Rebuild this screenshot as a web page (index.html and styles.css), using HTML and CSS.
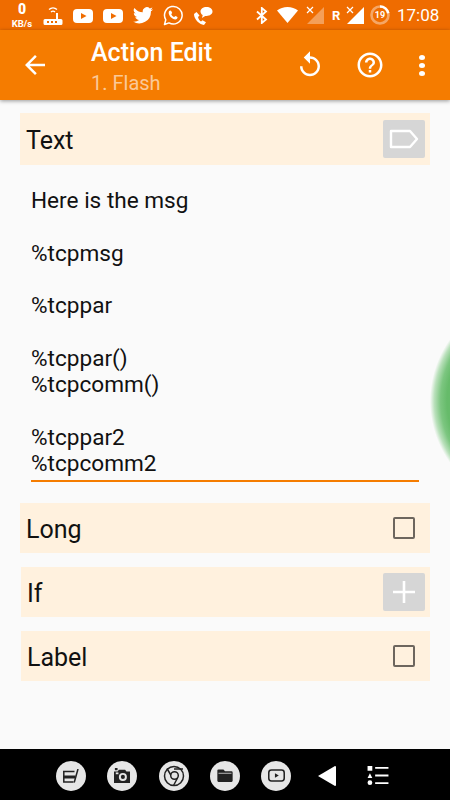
FILE: index.html
```html
<!DOCTYPE html>
<html lang="en">
<head>
  <meta charset="UTF-8">
  <meta name="viewport" content="width=device-width, initial-scale=1">
  <title>Action Edit</title>
  <link rel="stylesheet" href="styles.css">
</head>
<body>

  <div class="statusbar">
    <div class="netspeed"><b>0</b><span>KB/s</span></div>
    <svg class="st router" width="20" height="20" viewBox="0 0 20 20">
      <path d="M6 4.500a6 6 0 0 1 8 0M8 7a3 3 0 0 1 4 0" fill="none" stroke="#fff" stroke-width="1.300"/>
      <path d="M13 8h2v6h3a1.500 1.500 0 0 1 1.500 1.500v3A1.500 1.500 0 0 1 18 20H2a1.500 1.500 0 0 1-1.500-1.500v-3A1.500 1.500 0 0 1 2 14h11z" fill="#fff"/>
      <path d="M4 16h2v2H4zM8 16h2v2H8zM12 16h2v2h-2z" fill="#ef6c00"/>
    </svg>
    <svg class="st yt" width="20" height="14" viewBox="0 0 20 14">
      <rect width="20" height="14" rx="4" fill="#fff"/>
      <path d="M8 4l5.500 3L8 10z" fill="#ef6c00"/>
    </svg>
    <svg class="st yt" width="20" height="14" viewBox="0 0 20 14">
      <rect width="20" height="14" rx="4" fill="#fff"/>
      <path d="M8 4l5.500 3L8 10z" fill="#ef6c00"/>
    </svg>
    <svg class="st twitter" width="20" height="17" viewBox="0 0 24 20">
      <path d="M24 2.400a9.800 9.800 0 0 1-2.800.8A5 5 0 0 0 23.300.5a9.800 9.800 0 0 1-3.100 1.200 4.900 4.900 0 0 0-8.400 4.500A14 14 0 0 1 1.700.9a4.900 4.900 0 0 0 1.500 6.600 4.900 4.900 0 0 1-2.200-.6 4.900 4.900 0 0 0 3.900 4.900 4.900 4.900 0 0 1-2.200.1 4.900 4.900 0 0 0 4.600 3.400A9.900 9.900 0 0 1 0 17.300 14 14 0 0 0 21.500 4.900 10 10 0 0 0 24 2.400z" fill="#fff"/>
    </svg>
    <svg class="st whatsapp" width="20" height="21" viewBox="0 0 20 21">
      <path d="M1.500 19.500l1.300-4.700A8.800 8.800 0 1 1 6 17.900z" fill="none" stroke="#fff" stroke-width="1.500" stroke-linejoin="round"/>
      <path d="M7.200 5.500c-.6 0-1.500.8-1.500 2.200 0 3 3.500 6.700 6.600 6.700 1.400 0 2.300-1 2.300-1.800 0-.5-1.800-1.500-2.200-1.500-.4 0-.8 1-1.200 1-.8 0-2.900-2-2.900-2.900 0-.4.900-.8.900-1.200 0-.4-1.100-2.500-2-2.500z" fill="#fff"/>
    </svg>
    <svg class="st chat" width="20" height="20" viewBox="0 0 20 20">
      <path d="M3.500 6L1 8c0 5 5 10.500 10 11l2-2.800-3.500-2-1.500 1.300C6.500 14.500 5.500 13 5 11l1.500-1.500z" fill="#fff"/>
      <path d="M13.500 1C10 1 7.500 3 7.500 5.500c0 1.500.9 2.800 2.200 3.600L9 12l3.200-2.100h1.300c3.500 0 6-2 6-4.400S17 1 13.500 1z" fill="#fff"/>
    </svg>
    <svg class="st bluetooth" width="12" height="17" viewBox="0 0 12 17">
      <path d="M1 4.500l9 8L5.800 16V1L10 4.500l-9 8" fill="none" stroke="#fff" stroke-width="1.800"/>
    </svg>
    <svg class="st wifi" width="21" height="16" viewBox="0 0 21 16">
      <path d="M0 3.500C3 1.200 6.500 0 10.500 0S18 1.200 21 3.500L10.500 16z" fill="#fff"/>
    </svg>
    <svg class="st signal" width="18" height="18" viewBox="0 0 18 18">
      <path d="M18 1v17H1z" fill="#fff" fill-opacity=".35"/>
      <path d="M1 1l6 6M7 1L1 7" stroke="#fff" stroke-width="1.200"/>
    </svg>
    <span class="roam">R</span>
    <svg class="st signal2" width="18" height="18" viewBox="0 0 18 18">
      <path d="M18 1v17H1z" fill="#fff"/>
      <path d="M1 1l6 6M7 1L1 7" stroke="#ef6c00" stroke-width="3"/>
      <path d="M1 1l6 6M7 1L1 7" stroke="#fff" stroke-width="1.200"/>
    </svg>
    <div class="battery">
      <svg width="20" height="20" viewBox="0 0 20 20">
        <circle cx="10" cy="10" r="8.500" fill="none" stroke="#fff" stroke-opacity=".4" stroke-width="2.600"/>
        <path d="M10 1.500a8.500 8.500 0 0 1 8.300 6.800" fill="none" stroke="#fff" stroke-width="2.600"/>
      </svg>
      <span>19</span>
    </div>
    <span class="clock">17:08</span>
  </div>

  <header class="appbar">
    <svg class="back" width="30" height="30" viewBox="0 0 24 24">
      <path d="M20 11H7.830l5.590-5.590L12 4l-8 8 8 8 1.410-1.410L7.830 13H20v-2z" fill="#fff"/>
    </svg>
    <div class="titles">
      <h1>Action Edit</h1>
      <p>1. Flash</p>
    </div>
    <svg class="undo" width="30" height="30" viewBox="0 0 24 24">
      <path d="M12 5V1L7 6l5 5V7c3.310 0 6 2.690 6 6s-2.690 6-6 6-6-2.690-6-6H4c0 4.420 3.580 8 8 8s8-3.580 8-8-3.580-8-8-8z" fill="#fff"/>
    </svg>
    <svg class="help" width="30" height="30" viewBox="0 0 24 24">
      <path d="M11 18h2v-2h-2v2zm1-16C6.480 2 2 6.480 2 12s4.480 10 10 10 10-4.480 10-10S17.520 2 12 2zm0 18c-4.410 0-8-3.590-8-8s3.590-8 8-8 8 3.590 8 8-3.590 8-8 8zm0-14c-2.210 0-4 1.790-4 4h2c0-1.100.9-2 2-2s2 .9 2 2c0 2-3 1.750-3 5h2c0-2.250 3-2.500 3-5 0-2.210-1.790-4-4-4z" fill="#fff"/>
    </svg>
    <div class="dots"><i></i><i></i><i></i></div>
  </header>

  <main>
    <div class="row row-first">
      <span>Text</span>
      <div class="btn">
        <svg width="30" height="22" viewBox="0 0 30 22">
          <path d="M2 3h19l7 8-7 8H2z" fill="none" stroke="#fff" stroke-width="2.400" stroke-linejoin="round"/>
        </svg>
      </div>
    </div>

    <div class="textfield">Here is the msg

%tcpmsg

%tcppar

%tcppar()
%tcpcomm()

%tcppar2
%tcpcomm2</div>

    <div class="row row-long">
      <span>Long</span>
      <div class="check"></div>
    </div>
    <div class="row row-inset">
      <span>If</span>
      <div class="btn">
        <svg width="22" height="22" viewBox="0 0 22 22">
          <path d="M11 0v22M0 11h22" stroke="#fff" stroke-width="2.600"/>
        </svg>
      </div>
    </div>
    <div class="row row-inset">
      <span>Label</span>
      <div class="check"></div>
    </div>

    <div class="edge-glow"></div>
  </main>

  <nav class="navbar">
    <div class="app">
      <svg width="16" height="14" viewBox="0 0 16 14">
        <path d="M0 2.500h11.500M.8 2.500V13H10.500" fill="none" stroke="#222" stroke-width="1.500"/>
        <path d="M0 6.500h12.500L12 9.500H0z" fill="#222"/>
        <path d="M15 0l-3.800 13.500" fill="none" stroke="#222" stroke-width="1.500"/>
      </svg>
    </div>
    <div class="app">
      <svg width="18" height="16" viewBox="0 0 20 18">
        <path d="M1 4h4l1.500-2h7L15 4h4v13H1z" fill="#222"/>
        <circle cx="11" cy="10" r="4.500" fill="#e6e6e6"/>
        <circle cx="11" cy="10" r="2.300" fill="#222"/>
        <path d="M2 0h3v2.500H2z" fill="#222"/>
        <path d="M3 5h3v2H3z" fill="#e6e6e6"/>
      </svg>
    </div>
    <div class="app">
      <svg width="22" height="22" viewBox="0 0 22 22" fill="none" stroke="#222" stroke-width="1.500">
        <circle cx="11" cy="11" r="9.500"/>
        <circle cx="11.500" cy="10.500" r="3.800"/>
        <path d="M11 4h9M7.800 10L4 3.500M14.500 13L10.500 20.500"/>
      </svg>
    </div>
    <div class="app">
      <svg width="16" height="13" viewBox="0 0 20 17">
        <path d="M0 2a1.500 1.500 0 0 1 1.500-1.500H8L10 3h8.500A1.500 1.500 0 0 1 20 4.500v11a1.500 1.500 0 0 1-1.500 1.500h-17A1.500 1.500 0 0 1 0 15.500z" fill="#222"/>
        <path d="M1.500 5h17v1H1.500z" fill="#e6e6e6"/>
      </svg>
    </div>
    <div class="app">
      <svg width="17" height="13" viewBox="0 0 22 16">
        <rect x="1" y="1" width="20" height="14" rx="3.500" fill="none" stroke="#222" stroke-width="2"/>
        <path d="M9 5l5 3-5 3z" fill="#222"/>
      </svg>
    </div>
    <svg class="nav-back" width="18" height="20" viewBox="0 0 18 20">
      <path d="M17 0a1 1 0 0 1 1 1v18a1 1 0 0 1-1 1L0 10z" fill="#fff"/>
    </svg>
    <svg class="nav-list" width="22" height="19" viewBox="0 0 22 20">
      <rect width="5" height="5" fill="#fff"/>
      <path d="M2.500 7.500L5 12.500H0z" fill="#fff"/>
      <circle cx="2.500" cy="17.500" r="2.500" fill="#fff"/>
      <path d="M8 2h14M8 10h14M8 18h14" stroke="#fff" stroke-width="2"/>
    </svg>
  </nav>

</body>
</html>
```

FILE: styles.css
```css
* { margin: 0; padding: 0; box-sizing: border-box; }
html, body { height: 100%; }
body {
  display: flex; flex-direction: column;
  overflow: hidden;
  background: #fafafa; color: #111;
  font-family: Roboto, 'Noto Sans', sans-serif;
}
svg { display: block; flex: none; }

/* status bar */
.statusbar {
  height: 30px; flex: none; display: flex; align-items: center;
  background: #ef6c00; color: #fff;
}
.netspeed {
  width: 26px; margin-left: 9px;
  display: flex; flex-direction: column; align-items: center;
  font-weight: 700;
}
.netspeed b { font-size: 14px; line-height: 17px; }
.netspeed span { font-size: 9.500px; line-height: 11px; }
.router { margin-left: 8px; }
.yt { margin-left: 10px; margin-top: 1px; }
.twitter { margin-left: 10px; margin-top: 1px; }
.whatsapp { margin-left: 10px; }
.chat { margin-left: 10px; margin-top: 1px; }
.bluetooth { margin-left: 43px; }
.wifi { margin-left: 9px; }
.signal { margin-left: 8px; }
.roam { margin-left: 8px; width: 10px; font-size: 13px; font-weight: 700; }
.signal2 { margin-left: 4px; }
.battery { position: relative; width: 20px; height: 20px; margin-left: 6px; }
.battery span {
  position: absolute; inset: 0; text-align: center;
  font-size: 9px; font-weight: 700; line-height: 20px;
}
.clock { margin-left: 7px; font-size: 17px; }

/* app bar */
.appbar {
  height: 70px; flex: none; display: flex; align-items: center;
  background: #f57c00; color: #fff;
  box-shadow: 0 1px 4px rgba(0,0,0,.4);
  position: relative; z-index: 1;
}
.back { margin-left: 20px; }
.titles { margin-left: 41px; flex: 1; padding-top: 6px; }
.titles h1 { font-size: 25px; font-weight: 500; line-height: 30px; }
.titles p { font-size: 20px; line-height: 30px; color: rgba(255,255,255,.6); }
.undo { margin-right: 30px; }
.help { margin-right: 34px; }
.dots { display: flex; flex-direction: column; gap: 3px; margin-right: 25px; }
.dots i { width: 6px; height: 5px; background: #fff; border-radius: 50%; display: block; }

/* form */
main { flex: 1; position: relative; padding: 13px 20px 0; }
.row {
  display: flex; align-items: center; justify-content: space-between;
  height: 50px; padding-left: 6px;
  background: #fff1de;
  font-size: 25px;
}
.row span { margin-top: 2px; }
.row-first { height: 52px; }
.row-long { margin-top: 21px; }
.row-inset { margin-top: 14px; margin-left: 1px; }
.btn {
  width: 42px; height: 38px; margin-right: 5px;
  display: flex; align-items: center; justify-content: center;
  background: #d6d6d6; border-radius: 2px;
}
.check {
  width: 22px; height: 22px; margin-right: 15px;
  border: 2px solid #6d665e; border-radius: 2px;
}
.textfield {
  margin: 22px 11px 0;
  padding: 1px 0 3px;
  border-bottom: 2px solid #f57c00;
  white-space: pre-line;
  font-size: 22.600px; line-height: 26.300px;
}
.edge-glow {
  position: absolute; left: 430px; top: 239px;
  width: 20px; height: 124px;
  background: radial-gradient(circle 106px at 106px 62px, #66bb6a 0, #66bb6a 84%, #7cc680 90%, rgba(170,218,172,.8) 96%, rgba(250,250,250,0) 100%);
}

/* nav bar */
.navbar {
  height: 51px; flex: none; display: flex; align-items: center;
  padding: 2px 0 0 56px;
  background: #000;
}
.app {
  width: 30px; height: 30px; margin-right: 21.300px;
  display: flex; align-items: center; justify-content: center;
  background: #e6e6e6; border-radius: 50%;
}
.nav-back { margin-left: 6px; margin-right: 31px; }
```
